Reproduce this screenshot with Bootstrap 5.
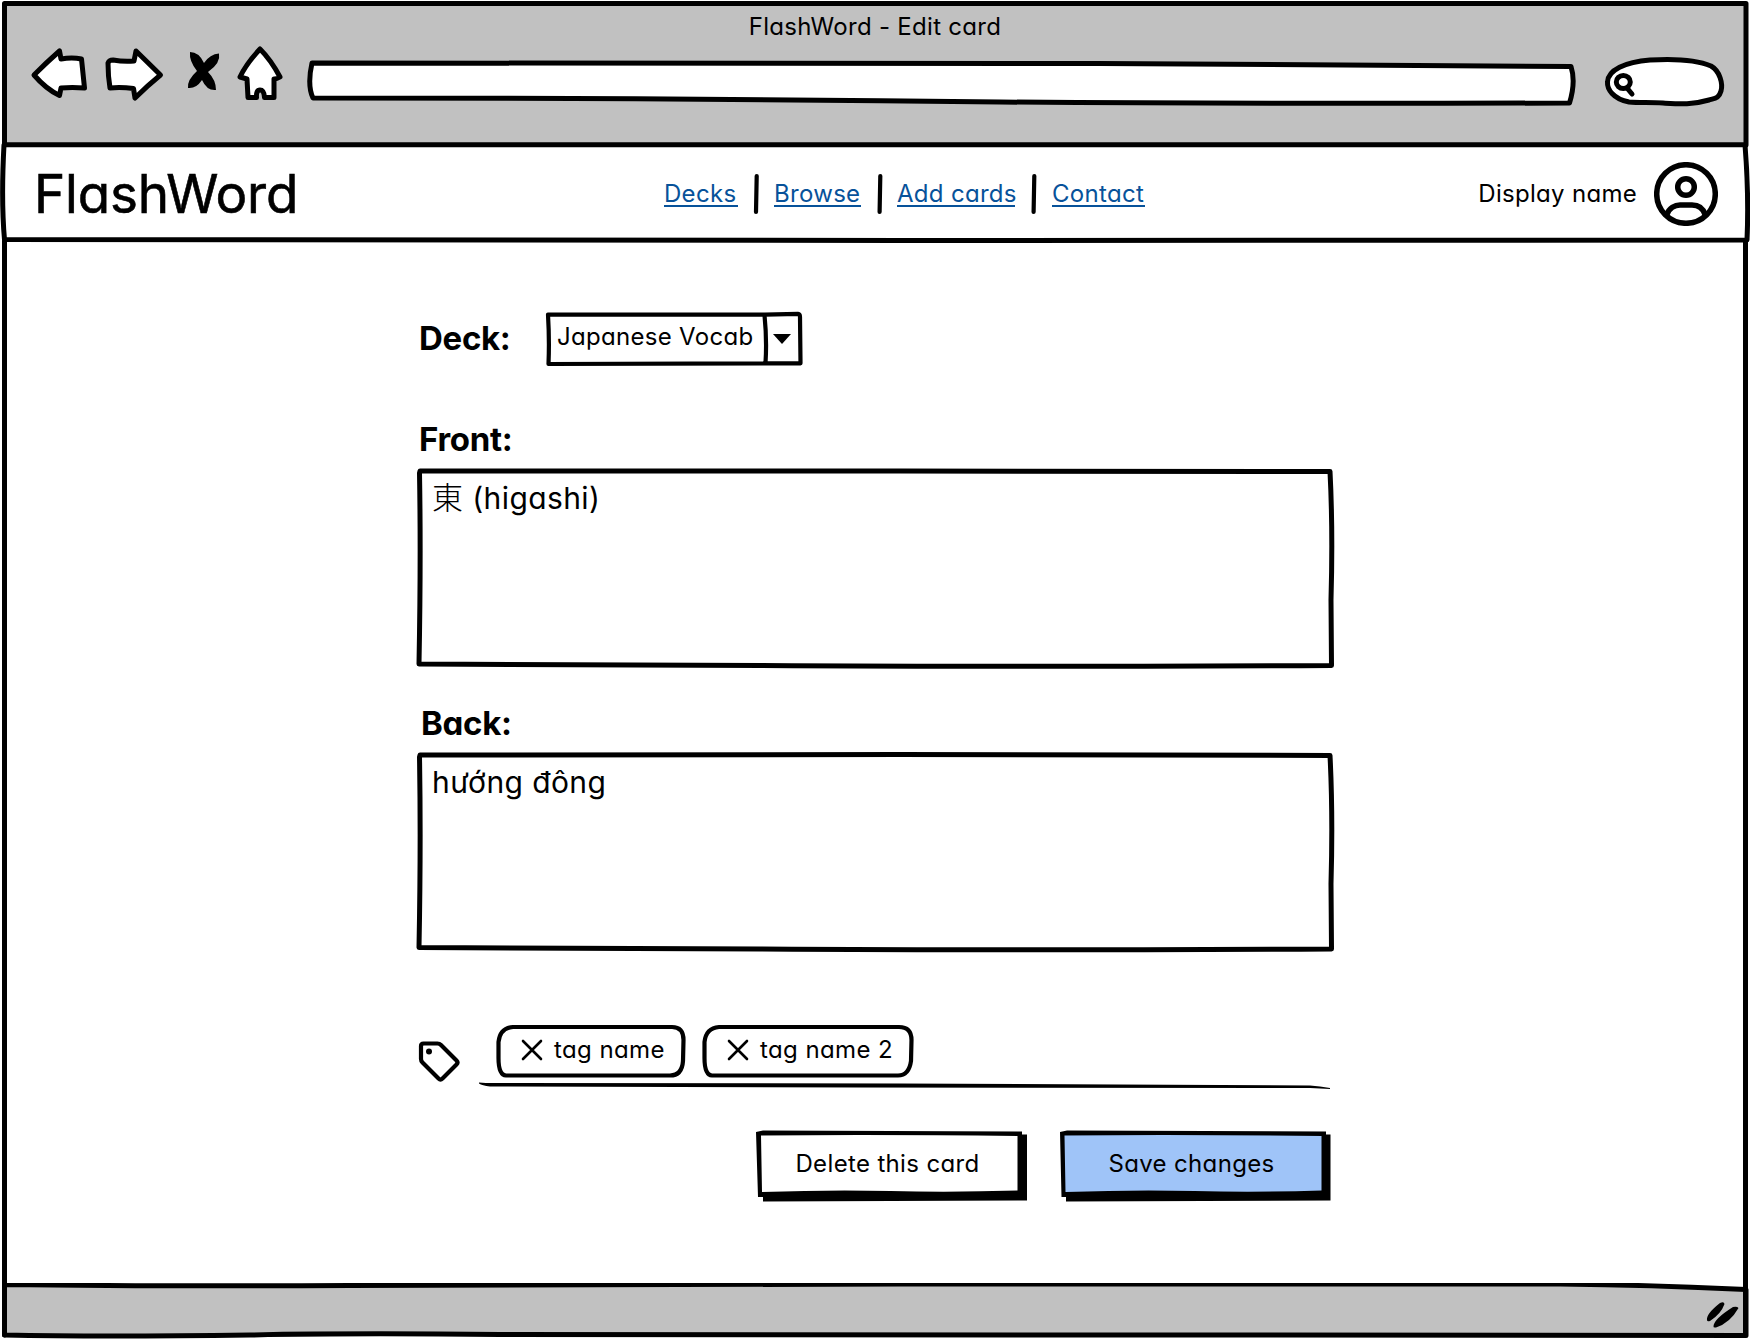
<!DOCTYPE html>
<html lang="en">
<head>
<meta charset="utf-8">
<title>FlashWord - Edit card</title>
<link href="https://cdn.jsdelivr.net/npm/bootstrap@5.3.0/dist/css/bootstrap.min.css" rel="stylesheet">
<style>
body{background:#fff;color:#000;font-family:Inter,"Noto Sans CJK JP",sans-serif;font-feature-settings:"cv11";font-size:24px;line-height:32px;letter-spacing:.3px;overflow:hidden}
svg{display:block;flex:none}
.ink{fill:none;stroke:#000;stroke-width:5;stroke-linejoin:round;stroke-linecap:round}
.thin{stroke-width:4.2}
.paper{fill:#fff}
.window{width:1750px;height:1340px}
.sketch{position:absolute;left:0;top:0;overflow:visible;pointer-events:none}
.chrome{height:142px;background:#c1c1c1;margin:3px 5px 0;flex:none}
.chrome-title{height:39px;padding-top:8px}
.tools{padding-left:23px}
.site-nav{height:96px;padding:2px 32px 0 34px;flex:none}
.brand{font-size:53px;line-height:60px;width:630px;letter-spacing:-.2px;-webkit-text-stroke:.6px #000}
.links a{color:#07529a;text-decoration:none;border-bottom:2px solid #07529a;line-height:26px;height:26px;display:block;white-space:nowrap}
.w-decks{width:74px}.w-browse{width:87px}.w-add{width:118px}.w-contact{width:93px}
.user-name{padding-bottom:1px;margin-right:17px}
.editor{width:915px;margin-left:417px;padding-top:71px}
.fld{font-weight:700;font-size:33px;line-height:40px;letter-spacing:-.3px;padding-left:2px}
.deck-label{width:129px;padding-top:6px}
.picker{width:257px;height:54px;position:relative;padding:9px 0 0 11px}
.front-label{margin:53px 0 9px}
.back-label{margin:36px 0 9px;padding-left:4px}
.box{position:relative;height:199px;padding:12px 15px;font-size:30px;line-height:36px;letter-spacing:.4px}
.kanji{font-size:31px;font-weight:300;font-family:"Noto Sans CJK JP",sans-serif;line-height:1}
.tagrow{margin-top:69px;height:68px}
.tagline{width:853px;padding:5px 0 0 18px;gap:16px}
.tagbox{height:54px;position:relative;padding:0 0 5px 24px;gap:10px;letter-spacing:.4px}
.tag-a{width:190px}.tag-b{width:212px}
.actions{margin-top:43px;gap:32px}
.action{width:272px;height:72px;position:relative;padding:17px 9px 0 0;text-align:center;letter-spacing:.35px}
.action span,.picker span{position:relative}
</style>
</head>
<body>
<div class="window position-relative d-flex flex-column">
  <header class="chrome">
    <div class="chrome-title text-center">FlashWord - Edit card</div>
    <div class="tools d-flex">
      <svg width="69" height="68" viewBox="28 42 69 68"><path class="ink paper" d="M34 75Q47 62 59.500 51L61 59Q72 57 81.500 59L84.500 88Q72 87 61 88L59.500 95.500Q46 89 34 75Z"/></svg>
      <svg width="79" height="68" viewBox="97 42 79 68"><path class="ink paper" d="M108 63Q109 60 113 60Q124 62 134 61L136 51L160.500 75Q147 86 135 98L133.500 88.500Q121 87 110 88Q108 76 108 63Z"/></svg>
      <svg width="52" height="68" viewBox="176 42 52 68"><path d="M190 52Q199 52 204 63Q210 54 219 53.500Q221 63 208 72Q216 80 216 90Q207 91 202 80Q196 89 188 88Q187 80 197 71Q189 61 190 52Z"/></svg>
      <svg width="67" height="68" viewBox="228 42 67 68"><path class="ink paper" d="M260 49Q271 60 280 77Q277 79 274 79L274 97.500H264.500Q264 90 260 90T256.500 97.500H248L247 79L240 77Q246 64 260 49Z"/></svg>
      <svg width="1295" height="68" viewBox="295 42 1295 68"><path class="ink paper" d="M312 63L1100 63.500Q1400 64.500 1571 66.500Q1576 82 1569.500 103Q1250 104 1000 102Q650 98 313 98Q307 85 312 63Z"/></svg>
      <svg width="140" height="68" viewBox="1590 42 140 68"><path class="ink paper" d="M1629 102C1613 99 1607 89 1607.500 82C1608 70 1625 62 1650 60C1675 58.500 1697 60 1711 66C1720 71 1723 84 1721 91C1719 98 1716 98 1709 100C1692 105 1680 104 1663 103C1650 102 1640 103 1629 102Z"/><ellipse class="ink" cx="1623.300" cy="82" rx="7" ry="6.500"/><path class="ink" d="M1627 88L1632 94"/></svg>
    </div>
  </header>

  <nav class="site-nav d-flex align-items-center">
    <div class="brand">FlashWord</div>
    <div class="links d-flex align-items-center">
      <a href="#" class="w-decks">Decks</a>
      <svg width="36" height="44" viewBox="0 0 36 44"><path class="ink thin" d="M18.700 4L18 40"/></svg>
      <a href="#" class="w-browse">Browse</a>
      <svg width="36" height="44" viewBox="0 0 36 44"><path class="ink thin" d="M19.300 4L18.600 40"/></svg>
      <a href="#" class="w-add">Add cards</a>
      <svg width="37" height="44" viewBox="0 0 37 44"><path class="ink thin" d="M19.300 4L18.600 40"/></svg>
      <a href="#" class="w-contact">Contact</a>
    </div>
    <span class="user-name ms-auto">Display name</span>
    <svg width="64" height="64" viewBox="1654 162 64 64"><g class="ink" style="stroke-width:5.500"><circle cx="1686" cy="194" r="29.300"/><circle cx="1686" cy="187" r="8.300"/><path d="M1667 214.500C1669 208 1675 205 1680 205H1692C1698 205 1703 208 1705 214.500"/></g></svg>
  </nav>

  <main class="editor flex-grow-1">
    <div class="d-flex">
      <div class="fld deck-label">Deck:</div>
      <div class="picker">
        <svg class="sketch" width="257" height="54" viewBox="546 312 257 54"><path class="ink thin" d="M548 314.500L765 314.700L798 313.800Q800 314 800 317L800.500 363.300L548.500 364Q549.500 340 548 314.500M764.500 315Q767 340 765.500 363"/><path d="M773 334H791L782 344Z"/></svg>
        <span>Japanese Vocab</span>
      </div>
    </div>
    <div class="fld front-label">Front:</div>
    <div class="box">
      <svg class="sketch" width="915" height="199" viewBox="417 468 915 199"><path class="ink" d="M420 471L900 471L1330 471.500Q1333 530 1331 600L1331.500 665.500Q1000 667 760 665.500L419 664Q421 560 419.500 473Z"/></svg>
      <span class="kanji">東</span> (higashi)
    </div>
    <div class="fld back-label">Back:</div>
    <div class="box">
      <svg class="sketch" width="915" height="199" viewBox="417 468 915 199"><path class="ink" d="M420 471L900 470.500L1330 471.500Q1333 530 1331 600L1331.500 665Q1000 666.500 760 665L419 663.500Q421 560 419.500 473Z"/></svg>
      hướng đông
    </div>

    <div class="tagrow d-flex">
      <svg width="61" height="68" viewBox="417 1021 61 68"><path class="ink thin" d="M423.500 1044.500H437.500Q439.500 1044.500 441 1046L456.500 1061.500Q458.500 1063.500 456.500 1065.500L442.500 1079.500Q440.500 1081.500 438.500 1079.500L422.500 1063.500Q421 1062 421 1060V1047Q421 1044.500 423.500 1044.500Z"/><circle cx="429" cy="1052.500" r="3"/></svg>
      <div class="tagline d-flex position-relative">
        <svg class="sketch" width="853" height="70" viewBox="478 1020 853 70"><path d="M479 1082.500Q485 1083 494 1083L900 1083.500L1310 1085.500L1320 1086.500L1330 1088V1089L1310 1088L860 1087.500L490 1086.500Q482 1085.500 479 1083.500Z"/></svg>
        <div class="tagbox tag-a d-flex align-items-center">
          <svg class="sketch" width="190" height="54" viewBox="496 1025 190 54"><path class="ink thin" d="M513 1027H672Q683.500 1027 683.500 1040L683 1061Q682 1075.500 670 1075.500H506Q498.500 1075 498.500 1058V1042Q500 1028 513 1027Z"/></svg>
          <svg width="24" height="24" viewBox="0 0 24 24"><path class="ink" style="stroke-width:2.600" d="M3 3L21 21M21 3L3 21"/></svg>
          <span>tag name</span>
        </div>
        <div class="tagbox tag-b d-flex align-items-center">
          <svg class="sketch" width="212" height="54" viewBox="702 1025 212 54"><path class="ink thin" d="M719 1027H899Q911.500 1027 911.500 1040L911 1061Q909 1075.500 898 1075.500H712Q704.500 1075 704.500 1058V1042Q706 1028 719 1027Z"/></svg>
          <svg width="24" height="24" viewBox="0 0 24 24"><path class="ink" style="stroke-width:2.600" d="M3 3L21 21M21 3L3 21"/></svg>
          <span>tag name 2</span>
        </div>
      </div>
    </div>

    <div class="actions d-flex justify-content-end">
      <div class="action" role="button">
        <svg class="sketch" width="272" height="72" viewBox="755 1131 272 72"><path d="M755 1132L762 1130.500L1021 1131.500V1134.500H1026V1200.500L762 1201.500V1197H757Z"/><path class="paper" d="M760 1135.500Q880 1134.500 1016.500 1136V1190.500Q950 1192.500 890 1191T761 1192Z"/></svg>
        <span>Delete this card</span>
      </div>
      <div class="action" role="button">
        <svg class="sketch" width="272" height="72" viewBox="755 1131 272 72"><path d="M755 1132L762 1130.500L1021 1131.500V1134.500H1025.500V1200.500L761 1201.500V1197H756.500Z"/><path fill="#9fc4f8" d="M759.500 1135.500Q880 1134.500 1016.500 1136V1190.500Q950 1192.500 890 1191T760.500 1192Z"/></svg>
        <span>Save changes</span>
      </div>
    </div>
  </main>

  <svg width="1750" height="57" viewBox="0 1283 1750 57"><path class="ink" style="fill:#c1c1c1" d="M4.500 1284.500Q150 1286.500 350 1285.500L900 1284H1560Q1650 1285 1746 1289.500V1335.500L500 1334.500Q350 1333 250 1335Q100 1337 4.500 1335Z"/><path d="M1707 1320Q1706 1314 1720 1303Q1724 1301 1724.500 1304Q1721 1314 1710 1321Q1707 1322 1707 1320ZM1713.500 1326Q1714 1319 1733 1307Q1737 1306 1738.500 1308Q1730 1323 1716 1327.500Q1713 1328 1713.500 1326Z"/></svg>

  <!-- hand-drawn window frame and header rules -->
  <svg class="sketch" width="1750" height="1340" viewBox="0 0 1750 1340"><path class="ink" d="M4.500 3.500H1746V145M4.500 3.500V145M4.500 241V1335M1745.500 241V1335"/><path class="ink" d="M4 144.800H1745Q1749 195 1747 240L900 240.500L4.500 239.500Q1 200 4 144.800Z"/></svg>
</div>
<script src="https://cdn.jsdelivr.net/npm/bootstrap@5.3.0/dist/js/bootstrap.bundle.min.js"></script>
</body>
</html>
